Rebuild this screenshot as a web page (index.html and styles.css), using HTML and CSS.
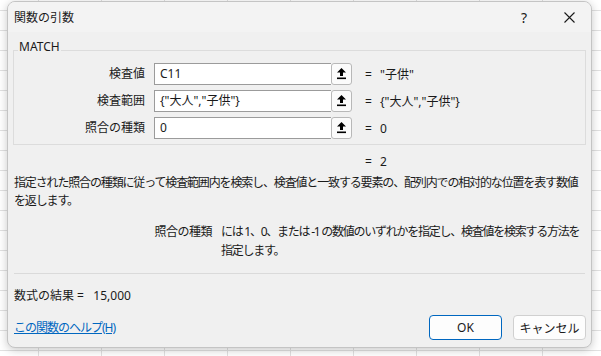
FILE: index.html
```html
<!DOCTYPE html>
<html lang="ja">
<head>
    <meta charset="UTF-8">
    <meta name="viewport" content="width=device-width, initial-scale=1.0">
    <title>関数の引数</title>
    <link rel="stylesheet" href="styles.css">
</head>
<body>
    <div class="dialog">
        <div class="titlebar">
            <span class="title">関数の引数</span>
            <span class="help">?</span>
            <span class="close">
                <svg width="11" height="11" viewBox="0 0 11 11"><path d="M0.5 0.5 L10.5 10.5 M10.5 0.5 L0.5 10.5" stroke="#1a1a1a" stroke-width="1.1" fill="none"/></svg>
            </span>
        </div>

        <div class="content">
            <div class="group">
                <span class="group-title">MATCH</span>

                <div class="arg-row">
                    <label class="arg-label">検査値</label>
                    <div class="arg-input">C11</div>
                    <div class="ref-btn">
                        <svg width="9" height="12" viewBox="0 0 9 12"><path d="M4.5 0 L9 4.5 L6 4.5 L6 8 L3 8 L3 4.5 L0 4.5 Z" fill="#000"/><rect x="0" y="9.5" width="9" height="1.6" fill="#000"/></svg>
                    </div>
                    <span class="eq">=</span>
                    <span class="arg-value">"子供"</span>
                </div>

                <div class="arg-row">
                    <label class="arg-label">検査範囲</label>
                    <div class="arg-input">{"大人","子供"}</div>
                    <div class="ref-btn">
                        <svg width="9" height="12" viewBox="0 0 9 12"><path d="M4.5 0 L9 4.5 L6 4.5 L6 8 L3 8 L3 4.5 L0 4.5 Z" fill="#000"/><rect x="0" y="9.5" width="9" height="1.6" fill="#000"/></svg>
                    </div>
                    <span class="eq">=</span>
                    <span class="arg-value">{"大人","子供"}</span>
                </div>

                <div class="arg-row">
                    <label class="arg-label">照合の種類</label>
                    <div class="arg-input">0</div>
                    <div class="ref-btn">
                        <svg width="9" height="12" viewBox="0 0 9 12"><path d="M4.5 0 L9 4.5 L6 4.5 L6 8 L3 8 L3 4.5 L0 4.5 Z" fill="#000"/><rect x="0" y="9.5" width="9" height="1.6" fill="#000"/></svg>
                    </div>
                    <span class="eq">=</span>
                    <span class="arg-value">0</span>
                </div>
            </div>

            <div class="result-line"><span class="eq">=</span><span class="arg-value">2</span></div>

            <p class="description">指定された照合の種類に従って検査範囲内を検索し、検査値と一致する要素の、配列内での相対的な位置を表す数値<br>を返します。</p>

            <div class="param-help">
                <span class="param-name">照合の種類</span>
                <p class="param-text">には 1、0、または -1 の数値のいずれかを指定し、検査値を検索する方法を<br>指定します。</p>
            </div>

            <div class="spacer"></div>
            <hr class="separator">

            <div class="formula-result">数式の結果 =&nbsp;&nbsp; 15,000</div>

            <div class="footer">
                <a class="help-link" href="#">この関数のヘルプ(H)</a>
                <div class="buttons">
                    <button class="btn btn-default">OK</button>
                    <button class="btn">キャンセル</button>
                </div>
            </div>
        </div>
    </div>
</body>
</html>
```

FILE: styles.css
```css
body {
    margin: 0;
    padding: 0;
    font-family: "Noto Sans", "Noto Sans CJK JP", sans-serif;
    font-size: 12px;
    color: #1a1a1a;
    background-color: #fff;
    background-image:
        linear-gradient(to right, #e1e1e1 1px, transparent 1px),
        linear-gradient(to bottom, #e1e1e1 1px, transparent 1px);
    background-size: 63px 20px;
    background-position: 38px 10px;
    height: 356px;
    overflow: hidden;
}

.dialog {
    width: 585px;
    height: 347px;
    margin: 1px 0 0 7px;
    box-sizing: border-box;
    background: #f0f0f0;
    border: 1px solid #c4c4c4;
    border-radius: 8px;
    box-shadow: 0 2px 10px rgba(0, 0, 0, 0.22);
    display: flex;
    flex-direction: column;
    overflow: hidden;
}

.titlebar {
    height: 30px;
    background: #f3f3f3;
    display: flex;
    align-items: center;
    padding-left: 6px;
    flex-shrink: 0;
}

.title {
    flex: 1;
    line-height: 16px;
    margin-top: 1px;
}

.help {
    width: 12px;
    text-align: center;
    font-size: 14px;
    margin-right: 34px;
}

.close {
    width: 11px;
    height: 11px;
    margin-right: 16px;
    display: flex;
}

.content {
    flex: 1;
    display: flex;
    flex-direction: column;
    padding: 0 5px 7px 5px;
}

.group {
    position: relative;
    margin-top: 18px;
    border: 1px solid #dcdcdc;
    padding: 12px 0 5px 0;
    display: flex;
    flex-direction: column;
    gap: 5px;
}

.group-title {
    position: absolute;
    top: -11px;
    left: 4px;
    padding: 0 1px;
    background: #f0f0f0;
    line-height: 14px;
}

.arg-row {
    display: flex;
    align-items: center;
    height: 22px;
}

.arg-label {
    width: 131px;
    text-align: right;
    margin-right: 9px;
    line-height: 16px;
}

.arg-input {
    width: 177px;
    height: 22px;
    box-sizing: border-box;
    background: #fff;
    border: 1px solid #9b9b9b;
    border-right: none;
    padding-left: 5px;
    line-height: 20px;
    white-space: nowrap;
}

.ref-btn {
    width: 21px;
    height: 22px;
    box-sizing: border-box;
    background: #fbfbfb;
    border: 1px solid #b8b8b8;
    border-radius: 3px;
    display: flex;
    align-items: center;
    justify-content: center;
}

.eq {
    margin-left: 13px;
    width: 15px;
}

.result-line {
    display: flex;
    padding-left: 339px;
    margin-top: 8px;
    line-height: 17px;
}

.result-line .eq {
    margin-left: 13px;
}

.description {
    margin: 4px 0 0 1px;
    line-height: 18px;
    letter-spacing: -1.15px;
    white-space: nowrap;
}

.param-help {
    display: flex;
    margin-top: 12px;
}

.param-name {
    width: 199px;
    text-align: right;
    margin-right: 9px;
    line-height: 19px;
    letter-spacing: -0.5px;
}

.param-text {
    margin: 0;
    line-height: 19px;
    letter-spacing: -1.25px;
    white-space: nowrap;
}

.spacer {
    flex: 1;
}

.separator {
    margin: 0 1px;
    border: none;
    border-top: 1px solid #dadada;
}

.formula-result {
    margin: 13px 0 0 1px;
    line-height: 18px;
}

.footer {
    display: flex;
    align-items: center;
    justify-content: space-between;
    margin-top: 10px;
    padding-left: 1px;
}

.help-link {
    color: #0067c0;
    text-decoration: underline;
    line-height: 16px;
    letter-spacing: -1px;
}

.buttons {
    display: flex;
    gap: 11px;
}

.btn {
    width: 73px;
    height: 25px;
    font-family: inherit;
    font-size: 12px;
    color: #1a1a1a;
    background: #fdfdfd;
    border: 1px solid #d0d0d0;
    border-radius: 4px;
    padding: 0;
}

.btn-default {
    border-color: #0067c0;
}
```
